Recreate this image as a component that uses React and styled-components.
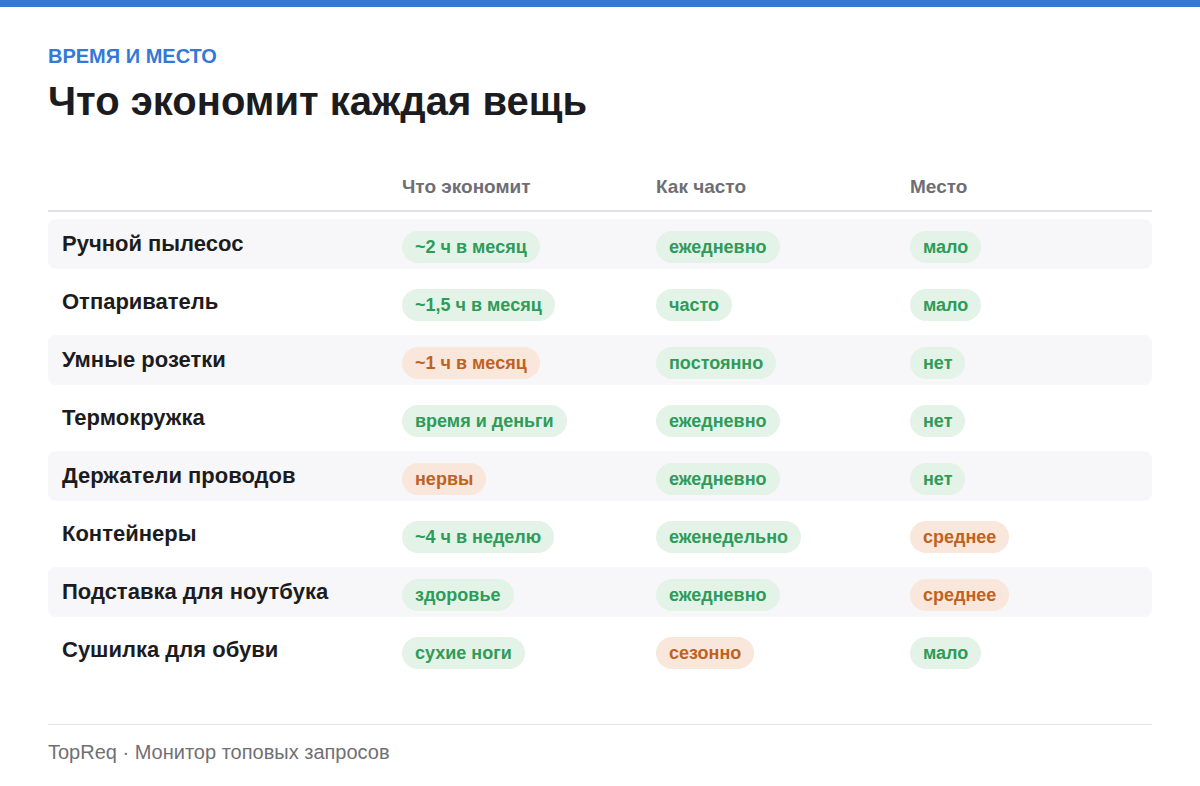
import React from 'react';
import styled, { createGlobalStyle } from 'styled-components';

const rows = [
    { name: 'Ручной пылесос', saves: ['~2 ч в месяц', 'good'], often: ['ежедневно', 'good'], place: ['мало', 'good'] },
    { name: 'Отпариватель', saves: ['~1,5 ч в месяц', 'good'], often: ['часто', 'good'], place: ['мало', 'good'] },
    { name: 'Умные розетки', saves: ['~1 ч в месяц', 'warn'], often: ['постоянно', 'good'], place: ['нет', 'good'] },
    { name: 'Термокружка', saves: ['время и деньги', 'good'], often: ['ежедневно', 'good'], place: ['нет', 'good'] },
    { name: 'Держатели проводов', saves: ['нервы', 'warn'], often: ['ежедневно', 'good'], place: ['нет', 'good'] },
    { name: 'Контейнеры', saves: ['~4 ч в неделю', 'good'], often: ['еженедельно', 'good'], place: ['среднее', 'warn'] },
    { name: 'Подставка для ноутбука', saves: ['здоровье', 'good'], often: ['ежедневно', 'good'], place: ['среднее', 'warn'] },
    { name: 'Сушилка для обуви', saves: ['сухие ноги', 'good'], often: ['сезонно', 'warn'], place: ['мало', 'good'] },
];

export default function App() {
    return (
        <>
            <GlobalStyle />
            <TopBar />
            <Page>
                <Eyebrow>ВРЕМЯ И МЕСТО</Eyebrow>
                <Title>Что экономит каждая вещь</Title>

                <HeadRow>
                    <HeadCell />
                    <HeadCell>Что экономит</HeadCell>
                    <HeadCell>Как часто</HeadCell>
                    <HeadCell>Место</HeadCell>
                </HeadRow>

                <Body>
                    {rows.map((r, i) => (
                        <Row key={r.name} $striped={i % 2 === 0}>
                            <Name>{r.name}</Name>
                            <Cell><Pill $tone={r.saves[1]}>{r.saves[0]}</Pill></Cell>
                            <Cell><Pill $tone={r.often[1]}>{r.often[0]}</Pill></Cell>
                            <Cell><Pill $tone={r.place[1]}>{r.place[0]}</Pill></Cell>
                        </Row>
                    ))}
                </Body>

                <Footer>TopReq · Монитор топовых запросов</Footer>
            </Page>
        </>
    );
}

const tones = {
    good: { fg: '#2e9b58', bg: '#e3f3e8' },
    warn: { fg: '#c0621f', bg: '#f9e7db' },
};

const GlobalStyle = createGlobalStyle`
  body {
    margin: 0;
    background: #ffffff;
    font-family: "Liberation Sans", Arial, sans-serif;
    color: #1c1c1f;
  }
`;

const TopBar = styled.div`
  height: 7px;
  background: #3479d6;
`;

const Page = styled.div`
  padding: 37px 48px 0;
`;

const Eyebrow = styled.div`
  font-size: 20px;
  line-height: 24px;
  font-weight: 700;
  color: #3479d6;
`;

const Title = styled.h1`
  margin: 10px 0 0;
  font-size: 40px;
  line-height: 46px;
  font-weight: 700;
  color: #1c1c1f;
`;

const columns = '340px 254px 254px 1fr';

const HeadRow = styled.div`
  display: grid;
  grid-template-columns: ${columns};
  align-items: center;
  height: 46px;
  margin-top: 40px;
  border-bottom: 2px solid #e2e2e6;
`;

const HeadCell = styled.div`
  padding: 0 14px;
  font-size: 19px;
  font-weight: 700;
  color: #6e6e74;
`;

const Body = styled.div`
  display: flex;
  flex-direction: column;
  gap: 8px;
  margin-top: 7px;
`;

const Row = styled.div`
  display: grid;
  grid-template-columns: ${columns};
  align-items: center;
  height: 50px;
  border-radius: 8px;
  background: ${(p) => (p.$striped ? '#f7f7f9' : 'transparent')};
`;

const Name = styled.div`
  padding: 0 14px;
  font-size: 22px;
  font-weight: 700;
  color: #1c1c1f;
`;

const Cell = styled.div`
  padding: 0 14px;
  display: flex;
  margin-top: 6px;
`;

const Pill = styled.span`
  display: inline-flex;
  align-items: center;
  height: 32px;
  padding: 0 13px;
  border-radius: 16px;
  font-size: 18px;
  font-weight: 700;
  color: ${(p) => tones[p.$tone].fg};
  background: ${(p) => tones[p.$tone].bg};
`;

const Footer = styled.div`
  margin-top: 49px;
  border-top: 1px solid #e4e4e6;
  padding-top: 16px;
  font-size: 20px;
  line-height: 22px;
  color: #707074;
`;
